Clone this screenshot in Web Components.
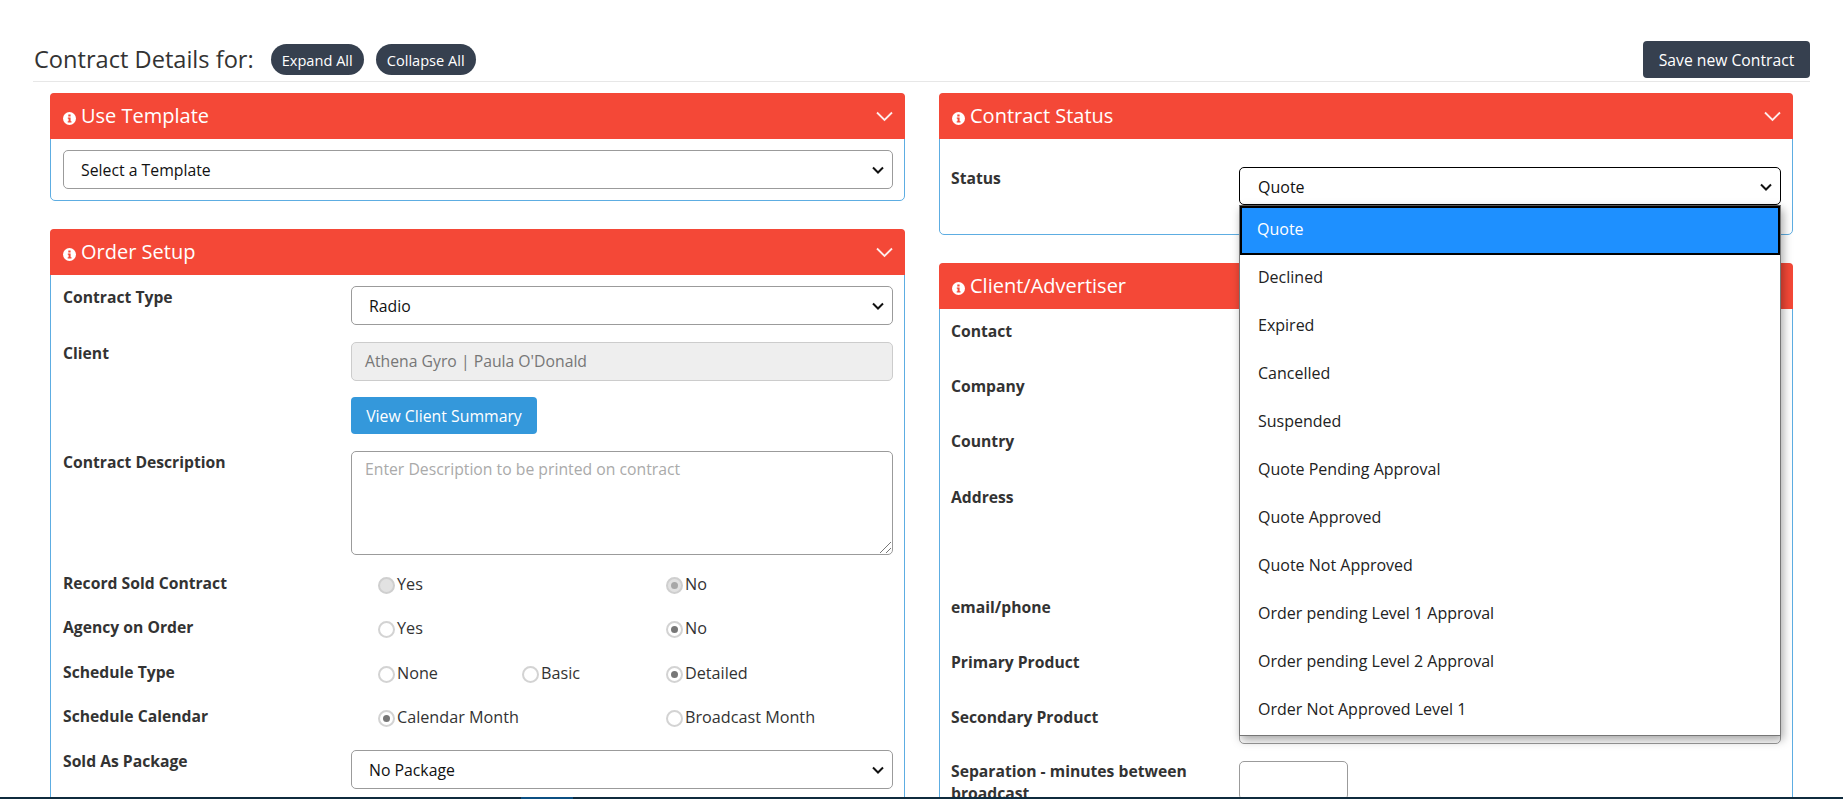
<!DOCTYPE html>
<html lang="en"><head><meta charset="utf-8"><title>Contract Details</title>
<style>
html,body{margin:0;height:799px;overflow:hidden;background:#fff;font-family:"Open Sans",sans-serif;color:#333;font-size:16px}
.cols{display:grid;grid-template-columns:854.5px 853.5px;column-gap:34.5px;padding-left:50px;align-items:start}
.stack{display:flex;flex-direction:column;gap:28px}
.l{--lp:12px;--col:288px}
.r{--lp:11px;--col:288px}
</style></head><body>
<contract-toolbar></contract-toolbar>
<div class="cols">
 <div class="stack l">
  <form-panel heading="Use Template"><fake-select text="Select a Template"></fake-select></form-panel>
  <form-panel heading="Order Setup" style="--gap:16.5px">
   <form-row label="Contract Type"><fake-select text="Radio"></fake-select></form-row>
   <form-row label="Client"><text-box disabled text="Athena Gyro | Paula O'Donald"></text-box></form-row>
   <form-row><action-button>View Client Summary</action-button></form-row>
   <form-row label="Contract Description"><text-box multiline placeholder="Enter Description to be printed on contract"></text-box></form-row>
   <radio-row label="Record Sold Contract" options="Yes:disabled,,No:disabled-checked"></radio-row>
   <radio-row label="Agency on Order" options="Yes,,No:checked"></radio-row>
   <radio-row label="Schedule Type" options="None,Basic,Detailed:checked"></radio-row>
   <radio-row label="Schedule Calendar" options="Calendar Month:checked,,Broadcast Month" style="margin-bottom:1.200px"></radio-row>
   <form-row label="Sold As Package"><fake-select text="No Package"></fake-select></form-row>
  </form-panel>
 </div>
 <div class="stack r">
  <form-panel heading="Contract Status" status>
   <form-row label="Status" last><fake-select text="Quote" focused><status-menu></status-menu></fake-select></form-row>
  </form-panel>
  <form-panel heading="Client/Advertiser" style="--gap:16px">
   <form-row label="Contact"><text-box></text-box></form-row>
   <form-row label="Company"><text-box></text-box></form-row>
   <form-row label="Country" style="--gap:17px"><fake-select></fake-select></form-row>
   <form-row label="Address"><text-box tall></text-box></form-row>
   <form-row label="email/phone"><text-box></text-box></form-row>
   <form-row label="Primary Product"><fake-select></fake-select></form-row>
   <form-row label="Secondary Product"><fake-select tick></fake-select></form-row>
   <form-row label="Separation - minutes between broadcast"><text-box short></text-box></form-row>
  </form-panel>
 </div>
</div>
<bottom-strip></bottom-strip>
<script>
const def=(name,html,init)=>customElements.define(name,class extends HTMLElement{
  connectedCallback(){ if(this.shadowRoot)return; const r=this.attachShadow({mode:'open'}); r.innerHTML=html; init&&init.call(this,r); }
});
const CHEV='<svg width="12" height="8" viewBox="0 0 12 8"><path d="M1 1.5 6 6.500 11 1.500" fill="none" stroke="#111" stroke-width="2"/></svg>';

def('contract-toolbar',`<style>
:host{display:flex;align-items:center;margin:41px 33px 11px 33px;height:37px;padding:0 0 3px 1px;border-bottom:1px solid #e7e7e7;box-sizing:content-box}
h1{font:400 23.600px/30px "Open Sans",sans-serif;color:#333;margin:0 17px 0 0;position:relative;top:-1px}
.pill{background:#36404f;color:#fff;font-size:14.600px;line-height:18px;height:31px;box-sizing:border-box;display:flex;align-items:center;border-radius:16px;padding:0 11px;margin-right:12px}
.save{margin-left:auto;background:#36404f;color:#fff;font-size:15.700px;height:37px;width:167px;box-sizing:border-box;display:flex;align-items:center;justify-content:center;border-radius:4px}
</style><h1>Contract Details for:</h1><span class="pill">Expand All</span><span class="pill">Collapse All</span><span class="save">Save new Contract</span>`);

def('form-panel',`<style>
:host{display:block;border:1px solid #5dade2;border-radius:5px;box-sizing:border-box}
header{height:46px;box-sizing:border-box;padding:0 11px 2px 13px;margin:-1px -1px 0;background:#f44837;color:#fff;border-radius:4px 4px 0 0;display:flex;align-items:center;font-size:20px}
header svg.i{margin-right:5px;flex:none;position:relative;top:3px}
header svg.c{margin-left:auto;flex:none;margin-right:1px;position:relative;top:1px}
.b{padding:11px 11px 11px var(--lp);display:flex;flex-direction:column}
:host([status]) .b{padding-top:28px;padding-bottom:29px}
</style><header><svg class="i" width="13" height="13" viewBox="0 0 13 13"><circle cx="6.5" cy="6.5" r="6.5" fill="#fff"/><path d="M5.3 2.5h2.3v1.9H5.3zM4.8 5.4h2.8v3.8h.9v1.3H4.7V9.200h.9V6.700h-.8z" fill="#f44837"/></svg><span class="t"></span><svg class="c" width="17" height="11" viewBox="0 0 17 11"><path d="M1 1.500 8.500 9 16 1.500" fill="none" stroke="#fff" stroke-width="1.800" opacity=".9"/></svg></header><div class="b"><slot></slot></div>`,
function(r){r.querySelector('.t').textContent=this.getAttribute('heading');});

def('form-row',`<style>
:host{display:grid;grid-template-columns:var(--col) 1fr;margin-bottom:var(--gap,16px)}
:host([last]){margin-bottom:0}
label{font-weight:700;font-size:15.700px;line-height:22px;color:#333;padding-right:20px}
</style><label></label><div><slot></slot></div>`,
function(r){r.querySelector('label').textContent=this.getAttribute('label')||'';});

def('fake-select',`<style>
:host{display:flex;position:relative;align-items:center;height:39px;box-sizing:border-box;border:1px solid #9b9b9b;border-radius:5px;padding:0 8px 0 17px;color:#111;font-size:15.800px;background:#fff}
:host([focused]){border-color:#000;height:38px;padding:1px 8px 0 18px;font-size:16px}
:host([tick]){height:38px}
svg{margin-left:auto}
.tick{position:absolute;left:149px;top:28px;width:2px;height:1px;background:#555}
</style><span class="v"></span>${CHEV}<slot></slot>`,
function(r){r.querySelector('.v').textContent=this.getAttribute('text')||'';
 if(this.hasAttribute('tick')){const d=document.createElement('i');d.className='tick';r.appendChild(d);}});

def('text-box',`<style>
:host{display:block;position:relative;height:39px;box-sizing:border-box;border:1px solid #9b9b9b;border-radius:5px;padding:6px 13px;font-size:15.750px;line-height:24px;background:#fff;color:#333}
:host([disabled]){background:#eee;border-color:#ccc;color:#777}
:host([multiline]){height:104px;color:#aaa;padding-top:5px}
:host([tall]){height:94px}
:host([short]){width:109px;margin-top:1px}
svg{position:absolute;right:0;bottom:0;display:none}
:host([multiline]) svg{display:block}
</style><span class="v"></span><svg width="14" height="14" viewBox="0 0 14 14"><path d="M2 13 13 2M8 13l5-5" stroke="#777" fill="none"/></svg>`,
function(r){r.querySelector('.v').textContent=this.getAttribute('text')||this.getAttribute('placeholder')||'';});

def('action-button',`<style>
:host{display:inline-flex;align-items:center;justify-content:center;height:37px;width:186px;background:#3498db;color:#fff;border-radius:4px;font-size:15.800px;box-sizing:border-box}
</style><slot></slot>`);

def('radio-row',`<style>
:host{display:grid;grid-template-columns:315px 144px 144px 144px;height:44.500px;align-items:start}
label{font-weight:700;font-size:15.700px;line-height:22px;color:#333;padding-top:.5px}
.o{display:flex;align-items:center;line-height:24px;font-size:16.200px;color:#333;white-space:nowrap;position:relative;top:.5px}
.r{flex:none;width:13px;height:13px;border:2px solid #d3d3d3;border-radius:50%;margin-right:2px;position:relative;top:1.500px;background:#fff;display:flex;align-items:center;justify-content:center}
.r i{width:7px;height:7px;border-radius:50%;background:#777;display:none}
.checked i,.disabled-checked i{display:block}
.disabled,.disabled-checked{background:#e2e2e2;border-color:#cfcfcf}
.disabled-checked i{background:#a8a8a8}
</style><label></label>`,
function(r){r.querySelector('label').textContent=this.getAttribute('label');
 this.getAttribute('options').split(',').forEach(s=>{const[t,k]=s.split(':');const d=document.createElement('div');
  if(t){d.className='o';d.innerHTML='<span class="r '+(k||'')+'"><i></i></span>';d.append(t);}
  r.appendChild(d);});});

def('status-menu',`<style>
:host{position:absolute;z-index:5;left:-1px;right:-1px;top:37px;background:#fff;border:1px solid #767676;border-top-color:#555;box-shadow:2px 4px 9px rgba(0,0,0,.35);box-sizing:border-box;height:531px;color:#222;font-size:16px}
div{height:48px;display:flex;align-items:center;padding-left:18px;box-sizing:border-box;position:relative;top:-2px}
.sel{background:#1e90ff;color:#fff;outline:2px solid #000;outline-offset:-2px;height:49px;top:0;padding-left:17px;padding-bottom:3px}
</style>`,
function(r){['Quote','Declined','Expired','Cancelled','Suspended','Quote Pending Approval','Quote Approved','Quote Not Approved','Order pending Level 1 Approval','Order pending Level 2 Approval','Order Not Approved Level 1'].forEach((t,i)=>{const d=document.createElement('div');d.textContent=t;if(!i)d.className='sel';r.appendChild(d);});});

def('bottom-strip',`<style>
:host{position:fixed;left:0;right:0;bottom:0;height:2px;background:#0f2b3d;z-index:9}
i{position:absolute;left:521px;width:52px;top:0;bottom:0;background:#0b4f82}
</style><i></i>`);
</script>
</body></html>
